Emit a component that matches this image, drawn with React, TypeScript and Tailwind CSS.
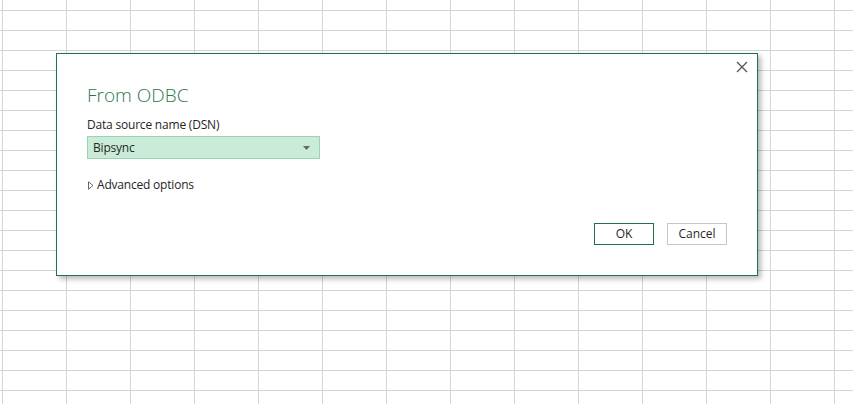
import React from "react";

export default function App() {
  return (
    <div
      className="w-[853px] h-[404px] overflow-hidden bg-white bg-[linear-gradient(to_right,#d4d4d4_1px,transparent_1px),linear-gradient(to_bottom,#d4d4d4_1px,transparent_1px)] bg-[size:64px_20px] bg-[position:2px_10px] pt-[53px] pl-[56px]"
      style={{ fontFamily: '"Segoe UI", "Open Sans", sans-serif' }}
    >
      <div className="relative w-[702px] h-[223px] border border-[#217346] bg-white shadow-[3px_3px_5px_rgba(0,0,0,0.28)] flex flex-col pl-[30px] pr-[30px]">
        <button className="absolute right-[5px] top-[3px] w-[20px] h-[20px] flex items-center justify-center">
          <svg width="12" height="12" viewBox="0 0 12 12">
            <path d="M1 1 L11 11 M11 1 L1 11" stroke="#555" strokeWidth="1.3" />
          </svg>
        </button>
        <div className="mt-[28px] text-[19px] leading-[27px] font-light text-[#2a7a4c]">From ODBC</div>
        <div className="mt-[8px] text-[12px] leading-[16px] text-[#262626] tracking-[-0.2px]">Data source name (DSN)</div>
        <div className="mt-[3px] w-[233px] h-[23px] border border-[#9bd3b3] bg-[#cbebd9] flex items-center justify-between pl-[5px] pr-[9px]">
          <span className="text-[12px] text-[#262626] tracking-[-0.2px]">Bipsync</span>
          <svg width="7" height="4" viewBox="0 0 7 4">
            <path d="M0 0 H7 L3.5 4 Z" fill="#666" />
          </svg>
        </div>
        <div className="mt-[18px] flex items-center gap-[3px] pl-[1px]">
          <svg width="6" height="9" viewBox="0 0 6 9">
            <path d="M0.5 0.8 L5 4.5 L0.5 8.2 Z" fill="none" stroke="#666" strokeWidth="1" />
          </svg>
          <span className="text-[12px] leading-[16px] text-[#262626] tracking-[-0.2px]">Advanced options</span>
        </div>
        <div className="mt-[30px] flex justify-end gap-[13px]">
          <button className="w-[60px] h-[22px] border border-[#217346] bg-white text-[12px] text-[#262626] flex items-center justify-center">OK</button>
          <button className="w-[60px] h-[22px] border border-[#c6c6c6] bg-white text-[12px] text-[#262626] flex items-center justify-center">Cancel</button>
        </div>
      </div>
    </div>
  );
}
